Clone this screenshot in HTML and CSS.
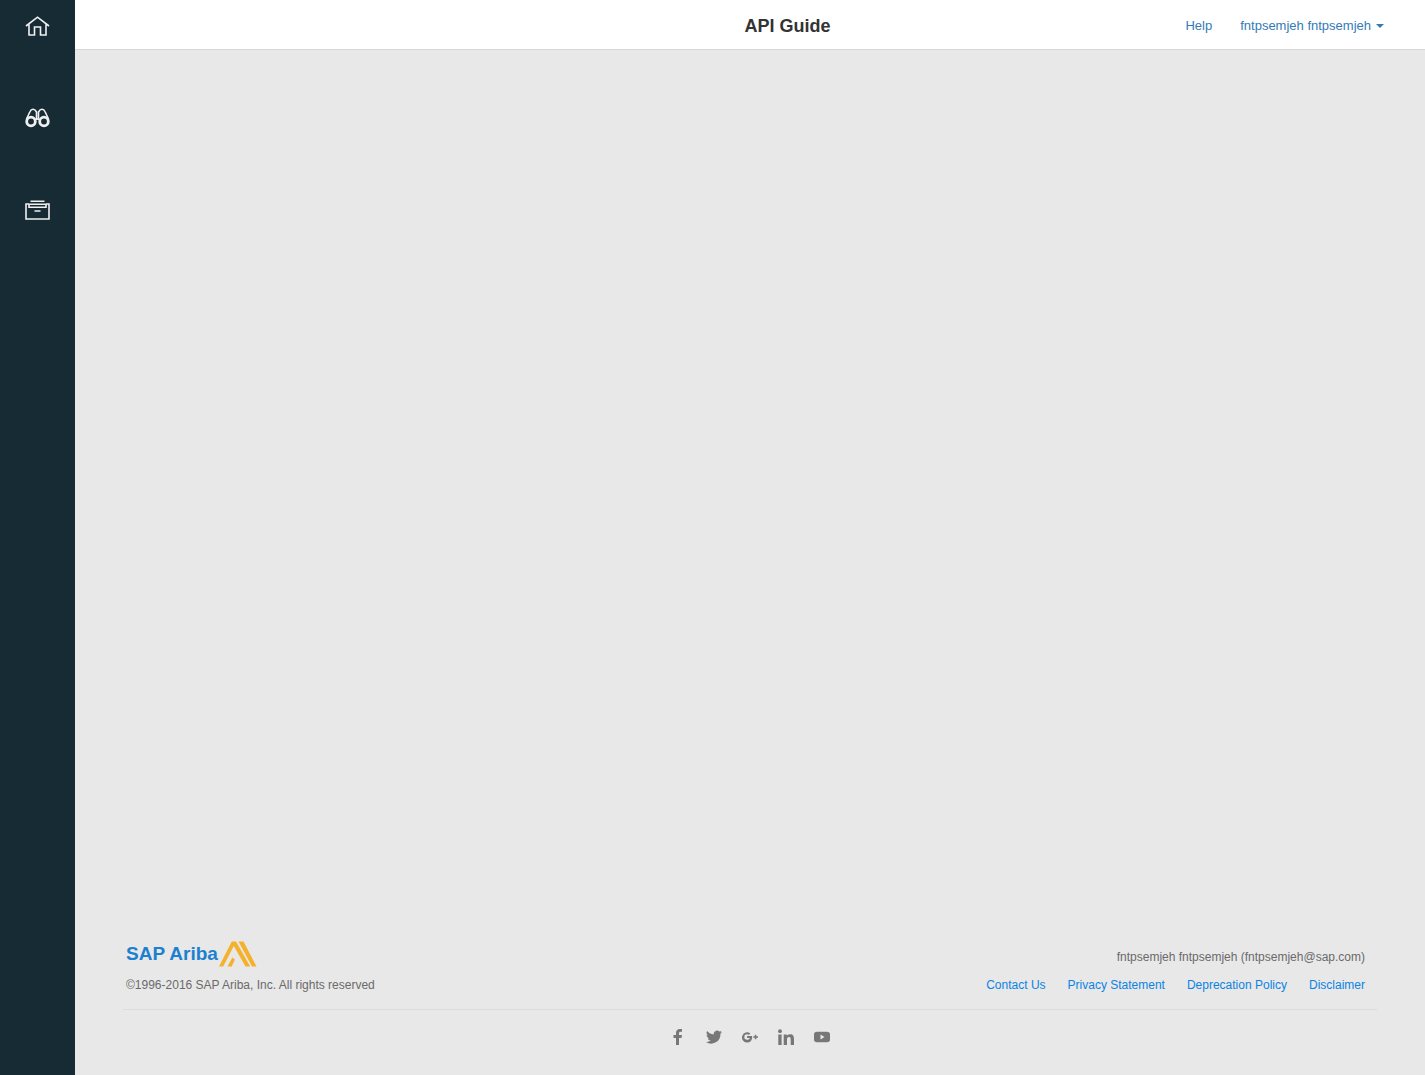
FILE: index.html
```html
<!DOCTYPE html>
<html lang="en">
<head>
<meta charset="utf-8">
<title>API Guide</title>
<link rel="stylesheet" href="styles.css">
</head>
<body>
<div class="page">
  <nav class="sidebar" aria-label="Main">
    <a class="nav-item" href="#home" aria-label="Home">
      <svg width="25" height="22" viewBox="0 0 25 22"><path d="M1 11 12.500 2.200 24 11M4 9.500v10.500h5.500v-8h6v8H21V9.500"/></svg>
    </a>
    <a class="nav-item" href="#discover" aria-label="Discover">
      <svg width="25" height="22" viewBox="0 0 25 22"><g><circle class="lens" cx="6" cy="14.500" r="4.300"/><circle class="lens" cx="19" cy="14.500" r="4.300"/><path d="M1.500 12 4.800 5Q6 2.300 8 2.300T11.500 5v8M23.500 12 20.200 5Q19 2.300 17 2.300T13.500 5v8M11 12h3"/></g></svg>
    </a>
    <a class="nav-item" href="#manage" aria-label="Manage">
      <svg width="25" height="22" viewBox="0 0 25 22"><path d="M4 5H1v15h23V5H21M5.500 2.200h14M4.500 5.200h16M4 4.500v3.700h17V4.500M9.500 12h6"/></svg>
    </a>
  </nav>
  <div class="content">
    <header class="topbar">
      <h1 class="title">API Guide</h1>
      <div class="account">
        <a class="top-link" href="#help">Help</a>
        <button class="user-menu" type="button">fntpsemjeh fntpsemjeh<span class="caret"></span></button>
      </div>
    </header>
    <main class="main"></main>
    <footer class="footer">
      <div class="footer-info">
        <div class="footer-side">
          <a class="logo" href="#top">SAP Ariba<svg width="38" height="26" viewBox="0 0 38 26"><path d="M0 25.500 12.800 .500H17L31.200 25.500H26.500L14.800 5 4.200 25.500ZM19.500 .500H24.500L37.500 25.500H33ZM8.500 25.500 13.300 16.500 16 18.500 12.700 25.500Z"/></svg></a>
          <span>©1996-2016 SAP Ariba, Inc. All rights reserved</span>
        </div>
        <div class="footer-side footer-right">
          <span class="signed-in">fntpsemjeh fntpsemjeh (fntpsemjeh@sap.com)</span>
          <nav class="footer-links" aria-label="Legal">
            <a href="#contact">Contact Us</a>
            <a href="#privacy">Privacy Statement</a>
            <a href="#deprecation">Deprecation Policy</a>
            <a href="#disclaimer">Disclaimer</a>
          </nav>
        </div>
      </div>
      <nav class="social" aria-label="Social media">
        <a href="#facebook" aria-label="Facebook"><svg width="16" height="16" viewBox="0 0 16 16"><path d="M6 16V9H3.500V6H6V4c0-2.600 1.500-4 3.900-4 1 0 2.100.1 2.100.1v2.600h-1.300C9.400 2.700 9 3.500 9 4.300V6h3l-.5 3H9v7Z"/></svg></a>
        <a href="#twitter" aria-label="Twitter"><svg width="16" height="16" viewBox="0 0 16 16"><path d="M16 3c-.6.300-1.200.400-1.900.500.700-.4 1.200-1 1.400-1.800-.6.400-1.300.6-2.100.8A3.300 3.300 0 0 0 7.800 5.500C5.100 5.400 2.700 4.100 1.100 2.100a3.300 3.300 0 0 0 1 4.400c-.5 0-1-.2-1.500-.4 0 1.600 1.100 2.900 2.600 3.200-.5.100-1 .1-1.500 0 .4 1.300 1.600 2.300 3.100 2.300A6.600 6.600 0 0 1 0 13a9.300 9.300 0 0 0 14.400-8.300C15 4.300 15.600 3.700 16 3Z"/></svg></a>
        <a href="#google-plus" aria-label="Google Plus"><svg width="16" height="16" viewBox="0 0 16 16"><path d="M5.100 7.100v1.900h2.700c-.2 1-1.100 1.800-2.700 1.800a2.800 2.800 0 0 1 0-5.600c.8 0 1.400.3 1.800.7l1.400-1.400A5.100 5.100 0 1 0 10 7.100ZM14.300 7.200V5.700h-1.500v1.500h-1.500v1.500h1.500v1.500h1.500V8.700H16V7.200Z"/></svg></a>
        <a href="#linkedin" aria-label="LinkedIn"><svg width="16" height="16" viewBox="0 0 16 16"><path d="M.3 5.500h3.300V16H.3ZM5.700 5.500h3.100V7c.5-1 1.600-1.800 3.200-1.800 3.300 0 4 2 4 5V16h-3.300v-5.100c0-1.600-.1-2.900-1.700-2.900S9 9.200 9 10.900V16H5.700Z"/><circle cx="2" cy="2.200" r="1.900"/></svg></a>
        <a href="#youtube" aria-label="YouTube"><svg width="16" height="16" viewBox="0 0 16 16"><path fill-rule="evenodd" d="M3 2.700h10c2 0 3 .8 3 3v4.600c0 2.200-1 3-3 3H3c-2 0-3-.8-3-3V5.700c0-2.200 1-3 3-3ZM6.500 5.500v5l4-2.500Z"/></svg></a>
      </nav>
    </footer>
  </div>
</div>
</body>
</html>
```
FILE: styles.css
```css
* {
  box-sizing: border-box;
}

body {
  margin: 0;
  background: #e8e8e8;
  color: #6a6a6a;
  font: 12px/16px "Liberation Sans", Arial, sans-serif;
}

a {
  color: #0a84e4;
  text-decoration: none;
}

svg {
  display: block;
}

.page {
  display: flex;
  min-height: 100vh;
}

.sidebar {
  display: flex;
  flex-direction: column;
  gap: 40px;
  width: 75px;
  flex: none;
  background: #172b35;
}

.nav-item {
  display: flex;
  align-items: center;
  justify-content: center;
  height: 52px;
}

.nav-item svg {
  fill: none;
  stroke: #f0f0f0;
  stroke-width: 1.6;
}

.nav-item .lens {
  stroke-width: 2.8;
}

.content {
  display: flex;
  flex: 1;
  flex-direction: column;
}

.topbar {
  display: grid;
  grid-template-columns: 1fr auto 1fr;
  align-items: center;
  height: 50px;
  padding: 2px 41px 0 116px;
  background: #fff;
  border-bottom: 1px solid #d8d8d8;
}

.title {
  grid-column: 2;
  margin: 0;
  color: #333;
  font-size: 18px;
  line-height: 24px;
}

.account {
  display: flex;
  align-items: center;
  justify-content: flex-end;
  gap: 28px;
}

.top-link,
.user-menu {
  color: #337ab7;
  font: 13px/20px "Liberation Sans", Arial, sans-serif;
}

.user-menu {
  display: flex;
  align-items: center;
  gap: 5px;
  padding: 0;
  border: 0;
  background: none;
  cursor: pointer;
}

.caret {
  border-top: 4px solid #337ab7;
  border-right: 4px solid transparent;
  border-left: 4px solid transparent;
}

.main {
  flex: 1;
}

.footer {
  padding: 0 48px 30px;
}

.footer-info {
  display: flex;
  justify-content: space-between;
  padding: 0 12px 16px 3px;
  border-bottom: 1px solid #dcdcdc;
}

.footer-side {
  display: flex;
  flex-direction: column;
  justify-content: flex-end;
  gap: 10px;
}

.footer-right {
  align-items: flex-end;
  gap: 12px;
}

.logo {
  display: flex;
  align-items: center;
  gap: 1px;
  color: #1b80d0;
  font-size: 19px;
  font-weight: bold;
}

.logo svg {
  fill: #f5b02c;
}

.footer-links {
  display: flex;
  gap: 22px;
}

.social {
  display: flex;
  justify-content: center;
  gap: 20px;
  padding-top: 19px;
}

.social svg {
  fill: #777;
}
```
